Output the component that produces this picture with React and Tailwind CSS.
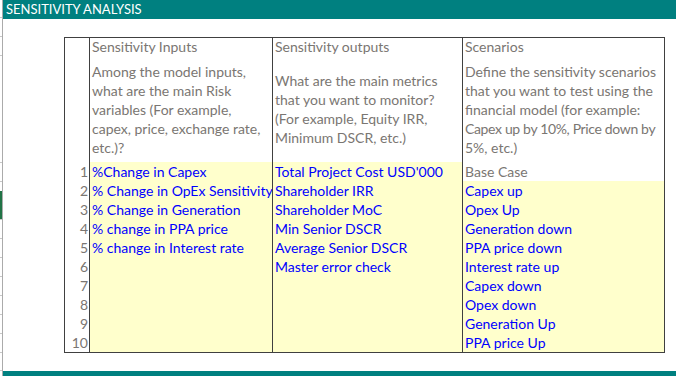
const rows = [
  ['1', '%Change in Capex', "Total Project Cost USD'000", 'Base Case'],
  ['2', '% Change in OpEx Sensitivity', 'Shareholder IRR', 'Capex up'],
  ['3', '% Change in Generation', 'Shareholder MoC', 'Opex Up'],
  ['4', '% change in PPA price', 'Min Senior DSCR', 'Generation down'],
  ['5', '% change in Interest rate', 'Average Senior DSCR', 'PPA price down'],
  ['6', '', 'Master error check', 'Interest rate up'],
  ['7', '', '', 'Capex down'],
  ['8', '', '', 'Opex down'],
  ['9', '', '', 'Generation Up'],
  ['10', '', '', 'PPA price Up'],
];

const descriptions = [
  ['Among the model inputs,', 'what are the main Risk', 'variables (For example,', 'capex, price, exchange rate,', 'etc.)?'],
  ['What are the main metrics', 'that you want to monitor?', '(For example, Equity IRR,', 'Minimum DSCR, etc.)'],
  ['Define the sensitivity scenarios', 'that you want to test using the', 'financial model (for example:', 'Capex up by 10%, Price down by', '5%, etc.)'],
];

// row heights of the sheet, mirrored on the row-header edge
const sheetRows = [18, 19, 19, 107, 19, 19, 19, 19, 19, 19, 19, 19, 19, 19, 18];

const cell = 'border-l border-[#404040] pl-[2px] whitespace-nowrap overflow-hidden';

export default function App() {
  return (
    <div className="flex h-[376px] w-[676px] overflow-hidden bg-white font-['Lato',sans-serif] text-[14px]">
      <div className="relative w-[3px] shrink-0 border-r border-[#ababab] flex flex-col">
        {sheetRows.map((h, i) => (
          <div key={i} style={{ height: h }} className="shrink-0 border-b border-[#c8c8c8]" />
        ))}
        <div className="absolute left-0 top-[191px] h-[28px] w-[2px] bg-[#217346]" />
      </div>

      <div className="flex-1 flex flex-col">
        <div className="h-[19px] bg-[#008080] pl-[3px] text-[13px] text-white leading-[19px]">SENSITIVITY ANALYSIS</div>

        <div className="mt-[18px] ml-[61px] w-[601px] border border-[#404040] grid grid-cols-[24px_183px_190px_202px]">
          <div className="h-[18px]" />
          {['Sensitivity Inputs', 'Sensitivity outputs', 'Scenarios'].map((t) => (
            <div key={t} className={`${cell} h-[18px] leading-[18px] text-[#7a7672]`}>{t}</div>
          ))}

          <div className="h-[106px]" />
          {descriptions.map((lines, i) => (
            <div key={i} className={`${cell} h-[106px] flex flex-col justify-center leading-[19px] text-[#7a7672]`}>
              {lines.map((l) => (
                <span key={l} className={l.startsWith('Capex up by') ? 'tracking-[-0.35px]' : ''}>{l}</span>
              ))}
            </div>
          ))}

          {rows.map(([n, a, b, c], i) => (
            <div key={n} className="contents">
              <div className="h-[19px] leading-[19px] pr-[1px] text-right text-[#7a7672]">{n}</div>
              <div className={`${cell} h-[19px] leading-[19px] bg-[#ffffcc] text-[#0000ff]`}>{a}</div>
              <div className={`${cell} h-[19px] leading-[19px] bg-[#ffffcc] text-[#0000ff]`}>{b}</div>
              <div
                className={`${cell} h-[19px] leading-[19px] ${i === 0 ? 'bg-white text-[#7a7672]' : 'bg-[#ffffcc] text-[#0000ff]'}`}
              >
                {c}
              </div>
            </div>
          ))}
        </div>

        <div className="mt-auto h-[5px] bg-[#008080]" />
      </div>
    </div>
  );
}
